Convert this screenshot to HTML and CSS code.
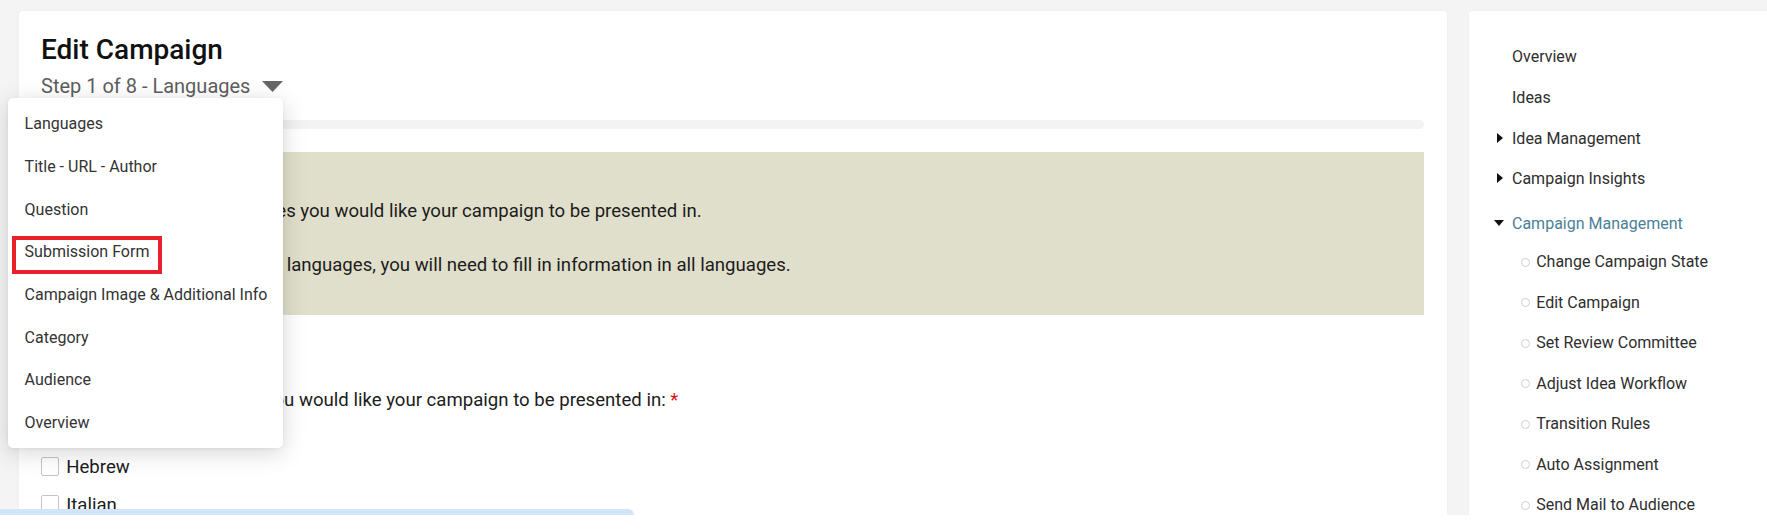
FILE: index.html
```html
<!DOCTYPE html>
<html lang="en">
<head>
<meta charset="utf-8">
<title>Edit Campaign</title>
<link rel="stylesheet" href="styles.css">
</head>
<body>
<div class="page">
  <div class="frame">
    <main class="card main-card">
      <header class="head">
        <h1 class="title">Edit Campaign</h1>
        <div class="step">Step 1 of 8 - Languages
          <svg class="caret" width="21" height="11" viewBox="0 0 21 11"><polygon points="0,0 21,0 10.5,11" fill="#666"/></svg>
        </div>
        <ul class="dropdown">
          <li class="dd-item">Languages</li>
          <li class="dd-item">Title - URL - Author</li>
          <li class="dd-item">Question</li>
          <li class="dd-item dd-marked">Submission Form<span class="mark"></span></li>
          <li class="dd-item">Campaign Image &amp; Additional Info</li>
          <li class="dd-item">Category</li>
          <li class="dd-item">Audience</li>
          <li class="dd-item">Overview</li>
        </ul>
      </header>
      <div class="progress"></div>
      <section class="info">
        <p>Please select all the languages you would like your campaign to be presented in.</p>
        <p>If you decide to have multiple languages, you will need to fill in information in all languages.</p>
      </section>
      <p class="question">Please click the languages you would like your campaign to be presented in: <span class="req">*</span></p>
      <div class="options">
        <label class="opt"><span class="box"></span>English</label>
        <label class="opt"><span class="box"></span>Hebrew</label>
        <label class="opt"><span class="box"></span>Italian</label>
        <label class="opt"><span class="box"></span>Spanish</label>
      </div>
    </main>
    <aside class="card side">
      <ul class="nav">
        <li class="nav-item"><span class="slot"></span>Overview</li>
        <li class="nav-item"><span class="slot"></span>Ideas</li>
        <li class="nav-item"><span class="slot"><svg class="tri-r" width="6" height="10" viewBox="0 0 6 10"><polygon points="0,0 6,5 0,10" fill="#111"/></svg></span>Idea Management</li>
        <li class="nav-item"><span class="slot"><svg class="tri-r" width="6" height="10" viewBox="0 0 6 10"><polygon points="0,0 6,5 0,10" fill="#111"/></svg></span>Campaign Insights</li>
        <li class="nav-item nav-open active"><span class="slot"><svg class="tri-d" width="10" height="6" viewBox="0 0 10 6"><polygon points="0,0 10,0 5,6" fill="#111"/></svg></span>Campaign Management</li>
      </ul>
      <ul class="sub">
        <li class="sub-item"><span class="dot"></span>Change Campaign State</li>
        <li class="sub-item active"><span class="dot"></span>Edit Campaign</li>
        <li class="sub-item"><span class="dot"></span>Set Review Committee</li>
        <li class="sub-item"><span class="dot"></span>Adjust Idea Workflow</li>
        <li class="sub-item"><span class="dot"></span>Transition Rules</li>
        <li class="sub-item"><span class="dot"></span>Auto Assignment</li>
        <li class="sub-item"><span class="dot"></span>Send Mail to Audience</li>
      </ul>
    </aside>
  </div>
  <div class="footer"></div>
  <div class="toast-bar"></div>
</div>
</body>
</html>
```
FILE: styles.css
```css
* { box-sizing: border-box; }
html, body { margin: 0; padding: 0; }
body {
  font-family: Roboto, "Liberation Sans", Arial, sans-serif;
  background: #ffffff;
  width: 1767px;
  height: 529px;
  overflow: hidden;
}
ul { list-style: none; margin: 0; padding: 0; }
p { margin: 0; }

.page { position: relative; width: 1767px; height: 529px; }

.frame {
  height: 515px;
  overflow: hidden;
  background: #f4f4f4;
  display: flex;
  align-items: flex-start;
  gap: 22px;
  padding: 11px 0 0 19px;
}
.footer { height: 14px; background: #fff; }

.card {
  background: #fff;
  border-radius: 4px;
  box-shadow: 0 0 3px rgba(0,0,0,0.04);
  min-height: 520px;
}

.main-card {
  position: relative;
  width: 1428px;
  flex-shrink: 0;
  padding: 22.4px 23px 0 22px;
}

.title {
  margin: 0;
  font-size: 28px;
  line-height: 34px;
  font-weight: 500;
  color: #111;
}
.step {
  margin-top: 4.5px;
  font-size: 20px;
  line-height: 28px;
  color: #5e5e5e;
  display: flex;
  align-items: center;
}
.caret { margin-left: 12px; margin-top: 1px; }

.dropdown {
  position: absolute;
  left: -11px;
  top: 87px;
  width: 275px;
  padding: 5.2px 0 3.2px;
  background: #fff;
  border-radius: 5px;
  box-shadow: 0 5px 24px rgba(0,0,0,0.16), 0 1px 4px rgba(0,0,0,0.06);
  z-index: 5;
}
.dd-item {
  position: relative;
  height: 42.7px;
  line-height: 42.7px;
  padding: 0 16.6px;
  font-size: 16px;
  color: #333;
  white-space: nowrap;
}
.mark {
  position: absolute;
  left: 4.3px;
  top: 4.5px;
  width: 149.5px;
  height: 38.4px;
  border: 4px solid #e8202a;
}

.progress {
  margin-top: 20px;
  height: 8.7px;
  border-radius: 5px;
  background: #f3f3f3;
}

.info {
  margin-top: 23.3px;
  background: #e0dfcb;
  padding: 46.9px 22px 37.7px 0;
  font-size: 18.6px;
  line-height: 24px;
  color: #1c1c1c;
}
.info p + p { margin-top: 30.4px; }

.question {
  margin-top: 73.3px;
  font-size: 18.6px;
  line-height: 24px;
  color: #1c1c1c;
}
.req { color: #e0101a; }

.options {
  margin-top: 4.4px;
  display: flex;
  flex-direction: column;
  gap: 14px;
}
.opt {
  display: flex;
  align-items: center;
  height: 24px;
  font-size: 18.6px;
  color: #1c1c1c;
}
.box {
  width: 18.7px;
  height: 18.7px;
  border: 1.5px solid #c4c4c4;
  border-radius: 2px;
  margin-left: -0.5px;
  margin-right: 7px;
  background: #fff;
}

.side {
  width: 330px;
  flex-shrink: 0;
  padding: 25.5px 0 0 25px;
}
.nav-item {
  display: flex;
  align-items: center;
  height: 40.67px;
  font-size: 16px;
  color: #2e2e2e;
  white-space: nowrap;
}
.slot {
  width: 18px;
  display: flex;
  align-items: center;
}
.tri-r { margin-left: 3px; margin-top: -1px; }
.tri-d { margin-top: -1px; }
.nav-open { height: 36px; margin-top: 6.3px; }
.active { color: #4b7f97; }

.sub-item {
  display: flex;
  align-items: center;
  height: 40.55px;
  padding-left: 26.7px;
  font-size: 16px;
  color: #2e2e2e;
  white-space: nowrap;
}
.dot {
  width: 9px;
  height: 9px;
  border: 1px solid #cfcfcf;
  border-radius: 50%;
  margin-right: 6.5px;
  margin-top: 1px;
}

.toast-bar {
  position: absolute;
  left: 0;
  bottom: 14px;
  width: 634px;
  height: 6px;
  background: #d3e3f9;
  border-radius: 0 7px 0 0;
  z-index: 6;
}
```
